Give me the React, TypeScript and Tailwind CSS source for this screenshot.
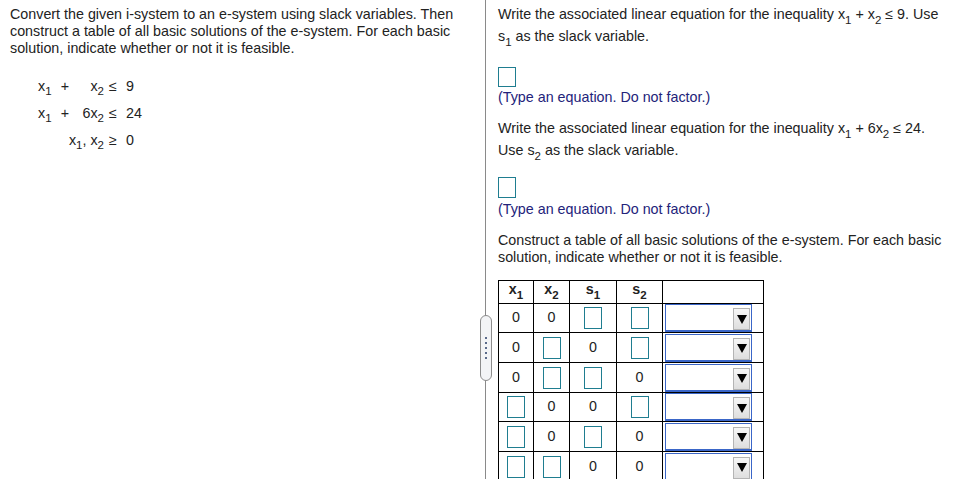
import React from "react";

const font = { fontFamily: '"Liberation Sans", Arial, sans-serif' };

function Box() {
  return <div className="w-[18px] h-[22px] border border-[#1f7d90] bg-white mx-auto" />;
}

function Dropdown() {
  return (
    <div className="ml-[2px] w-[87px] h-[28px] border border-b-2 border-[#3a66c8] bg-white flex items-start justify-end pr-[1px] pt-[3px]">
      <div className="w-[17px] h-[22px] border border-[#b4b4b4] bg-gradient-to-b from-[#f7f7f7] to-[#dedede] flex items-center justify-center">
        <svg width="10" height="9" viewBox="0 0 10 9">
          <polygon points="0,0 10,0 5,9" fill="#000" />
        </svg>
      </div>
    </div>
  );
}

type Cell = "0" | "box";

const rows: Cell[][] = [
  ["0", "0", "box", "box"],
  ["0", "box", "0", "box"],
  ["0", "box", "box", "0"],
  ["box", "0", "0", "box"],
  ["box", "0", "box", "0"],
  ["box", "box", "0", "0"],
];

function V({ n, s }: { n: string; s: string }) {
  return (
    <span>
      {n}
      <sub className="text-[11.5px] bottom-[-0.4em]">{s}</sub>
    </span>
  );
}

export default function App() {
  return (
    <div className="relative w-[963px] h-[479px] overflow-hidden bg-white text-[14.3px] text-[#222]" style={font}>
      <div className="flex h-full">
        {/* left: the question */}
        <div className="w-[486px] shrink-0 border-r border-[#8a8a8a] pl-[10px] pt-[6px]">
          <p className="leading-[17px]">
            Convert the given i-system to an e-system using slack variables. Then
            <br />
            construct a table of all basic solutions of the e-system. For each basic
            <br />
            solution, indicate whether or not it is feasible.
          </p>

          <div className="mt-[16px] ml-[28px] grid grid-cols-[18px_18px_30px_18px_30px] auto-rows-[27px] items-center">
            <div><V n="x" s="1" /></div>
            <div className="text-center">+</div>
            <div className="text-right"><V n="x" s="2" /></div>
            <div className="text-center">≤</div>
            <div className="pl-[4px]">9</div>

            <div><V n="x" s="1" /></div>
            <div className="text-center">+</div>
            <div className="text-right">6<V n="x" s="2" /></div>
            <div className="text-center">≤</div>
            <div className="pl-[4px]">24</div>

            <div className="col-span-3 text-right">
              <V n="x" s="1" />, <V n="x" s="2" />
            </div>
            <div className="text-center">≥</div>
            <div className="pl-[4px]">0</div>
          </div>
        </div>

        {/* right: the answer parts */}
        <div className="flex-1 pl-[12px] pt-[3px]">
          <p className="leading-[22px]">
            Write the associated linear equation for the inequality <V n="x" s="1" /> + <V n="x" s="2" /> ≤ 9. Use
            <br />
            <V n="s" s="1" /> as the slack variable.
          </p>
          <div className="mt-[20px] w-[18px] h-[20px] border border-[#1f7d90]" />
          <p className="mt-[2px] leading-[17px] text-[#23237a]">(Type an equation. Do not factor.)</p>

          <p className="mt-[11px] leading-[22px]">
            Write the associated linear equation for the inequality <V n="x" s="1" /> + 6<V n="x" s="2" /> ≤ 24.
            <br />
            Use <V n="s" s="2" /> as the slack variable.
          </p>
          <div className="mt-[16px] w-[18px] h-[21px] border border-[#1f7d90]" />
          <p className="mt-[3px] leading-[17px] text-[#23237a]">(Type an equation. Do not factor.)</p>

          <p className="mt-[14px] leading-[17px]">
            Construct a table of all basic solutions of the e-system. For each basic
            <br />
            solution, indicate whether or not it is feasible.
          </p>

          <table className="mt-[14px] table-fixed border-collapse border border-black">
            <colgroup>
              <col className="w-[35px]" />
              <col className="w-[36px]" />
              <col className="w-[47px]" />
              <col className="w-[46px]" />
              <col className="w-[101px]" />
            </colgroup>
            <thead>
              <tr className="h-[23px] font-bold">
                <th className="border border-black text-center align-top pt-[1px] leading-[15px]"><V n="x" s="1" /></th>
                <th className="border border-black text-center align-top pt-[1px] leading-[15px]"><V n="x" s="2" /></th>
                <th className="border border-black text-center align-top pt-[1px] leading-[15px]"><V n="s" s="1" /></th>
                <th className="border border-black text-center align-top pt-[1px] leading-[15px]"><V n="s" s="2" /></th>
                <th className="border border-black" />
              </tr>
            </thead>
            <tbody>
              {rows.map((r, i) => (
                <tr key={i} className={i % 3 === 0 ? "h-[29px]" : "h-[30px]"}>
                  {r.map((c, j) => (
                    <td key={j} className="border border-black text-center p-0">
                      {c === "box" ? <Box /> : "0"}
                    </td>
                  ))}
                  <td className="border border-black p-0 align-middle">
                    <Dropdown />
                  </td>
                </tr>
              ))}
            </tbody>
          </table>
        </div>
      </div>

      {/* drag handle on the divider */}
      <div className="absolute left-[480px] top-[315px] w-[12px] h-[66px] rounded-full border border-[#8c8c8c] bg-[#f3f4f6] flex flex-col items-center justify-center gap-[3px]">
        {[0, 1, 2, 3, 4].map((d) => (
          <div key={d} className="w-[2px] h-[2px] bg-[#5a6a8a]" />
        ))}
      </div>
    </div>
  );
}
